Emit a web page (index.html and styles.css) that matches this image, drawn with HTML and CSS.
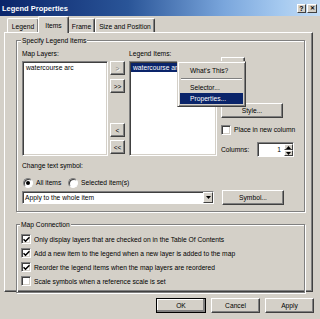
FILE: index.html
```html
<!DOCTYPE html>
<html lang="en">

<head>
  <meta charset="UTF-8">
  <meta name="viewport" content="width=device-width, initial-scale=1.0">
  <title>Legend Properties</title>
  <link rel="stylesheet" href="styles.css">
</head>

<body>
  <div class="dialog">
    <div class="titlebar">
      <span class="titlebar__text">Legend Properties</span>
      <span class="cap-btn">?</span>
      <span class="cap-btn cap-btn--close">&#x2715;</span>
    </div>

    <div class="tabs">
      <span class="tab tab--legend">Legend</span>
      <span class="tab tab--items tab--active">Items</span>
      <span class="tab tab--frame">Frame</span>
      <span class="tab tab--size">Size and Position</span>
    </div>

    <div class="panel">
      <!-- 항목 지정 -->
      <fieldset class="group group--items">
        <legend>Specify Legend Items</legend>
        <div class="lists">
          <div class="list-col">
            <div class="label">Map Layers:</div>
            <div class="listbox listbox--layers">
              <div class="list-item">watercourse arc</div>
            </div>
          </div>
          <div class="move-col">
            <button class="btn btn--move btn--off">&gt;</button>
            <button class="btn btn--move btn--all">&gt;&gt;</button>
            <button class="btn btn--move btn--back">&lt;</button>
            <button class="btn btn--move btn--back-all">&lt;&lt;</button>
          </div>
          <div class="list-col">
            <div class="label">Legend Items:</div>
            <div class="listbox listbox--legend">
              <div class="list-item list-item--sel">watercourse arc</div>
            </div>
          </div>
          <div class="side-col">
            <button class="btn btn--arrow btn--up"></button>
            <button class="btn btn--arrow btn--down"></button>
            <button class="btn btn--style">Style...</button>
            <div class="check-row check-row--column">
              <span class="check"></span>
              <span>Place in new column</span>
            </div>
            <div class="columns-row">
              <span class="columns-row__label">Columns:</span>
              <div class="spin">
                <span class="spin__value">1</span>
                <div class="spin__btns">
                  <span class="spin__btn"><svg width="5" height="3" viewBox="0 0 5 3"><path d="M0 3h5L2.5 0z" fill="#000"/></svg></span>
                  <span class="spin__btn"><svg width="5" height="3" viewBox="0 0 5 3"><path d="M0 0h5L2.5 3z" fill="#000"/></svg></span>
                </div>
              </div>
            </div>
          </div>
        </div>

        <div class="label label--symbol">Change text symbol:</div>
        <div class="radios">
          <span class="radio radio--on"></span>
          <span class="radio-text radio-text--all">All items</span>
          <span class="radio"></span>
          <span class="radio-text">Selected item(s)</span>
        </div>
        <div class="symbol-row">
          <div class="combo">
            <span class="combo__text">Apply to the whole item</span>
            <span class="combo__btn"><svg width="5" height="3" viewBox="0 0 5 3"><path d="M0 0h5L2.5 3z" fill="#000"/></svg></span>
          </div>
          <button class="btn btn--symbol">Symbol...</button>
        </div>
      </fieldset>

      <!-- 지도 연결 -->
      <fieldset class="group group--connection">
        <legend>Map Connection</legend>
        <div class="check-row">
          <span class="check check--on"><svg width="7" height="7" viewBox="0 0 7 7"><path d="M0.5 3.2 2.5 5.2 6.5 1.2" fill="none" stroke="#000" stroke-width="1.6"/></svg></span>
          <span>Only display layers that are checked on in the Table Of Contents</span>
        </div>
        <div class="check-row">
          <span class="check check--on"><svg width="7" height="7" viewBox="0 0 7 7"><path d="M0.5 3.2 2.5 5.2 6.5 1.2" fill="none" stroke="#000" stroke-width="1.6"/></svg></span>
          <span>Add a new item to the legend when a new layer is added to the map</span>
        </div>
        <div class="check-row">
          <span class="check check--on"><svg width="7" height="7" viewBox="0 0 7 7"><path d="M0.5 3.2 2.5 5.2 6.5 1.2" fill="none" stroke="#000" stroke-width="1.6"/></svg></span>
          <span>Reorder the legend items when the map layers are reordered</span>
        </div>
        <div class="check-row">
          <span class="check"></span>
          <span>Scale symbols when a reference scale is set</span>
        </div>
      </fieldset>
    </div>

    <div class="footer">
      <button class="btn btn--footer btn--default">OK</button>
      <button class="btn btn--footer">Cancel</button>
      <button class="btn btn--footer">Apply</button>
    </div>

    <!-- 우클릭 메뉴 -->
    <div class="menu">
      <div class="menu__item">What's This?</div>
      <div class="menu__sep"></div>
      <div class="menu__item">Selector...</div>
      <div class="menu__item menu__item--hot">Properties...</div>
    </div>
  </div>
</body>

</html>
```

FILE: styles.css
```css
* {
  box-sizing: border-box;
}

body {
  margin: 0;
  background: #d4d0c8;
  font: 6.7px/9px "Liberation Sans", Arial, sans-serif;
  color: #000;
}

.dialog {
  position: relative;
  width: 320px;
  height: 319px;
  overflow: hidden;
  background: #d4d0c8;
}

/* title bar */
.titlebar {
  display: flex;
  align-items: center;
  height: 16px;
  padding: 0 3px 0 2px;
  background: linear-gradient(90deg, #0a246a 0%, #2a5598 40%, #7aa6dc 70%, #a6caf0 88%, #c4dcf4 100%);
}

.titlebar__text {
  flex: 1;
  color: #fff;
  font-weight: bold;
  font-size: 7.5px;
}

.cap-btn {
  display: flex;
  align-items: center;
  justify-content: center;
  width: 9px;
  height: 9px;
  background: #d4d0c8;
  border: 1px solid;
  border-color: #fff #404040 #404040 #fff;
  font-size: 7px;
  font-weight: bold;
  line-height: 1;
}

.cap-btn--close {
  width: 10px;
  margin-left: 1px;
  font-size: 6px;
}

/* tabs */
.tabs {
  display: flex;
  align-items: flex-end;
  height: 16px;
  padding-left: 6px;
}

.tab {
  position: relative;
  height: 14px;
  padding-top: 3px;
  text-align: center;
  white-space: nowrap;
  border: 1px solid;
  border-bottom: 0;
  border-color: #fff #404040 #fff #fff;
  border-radius: 2px 2px 0 0;
  box-shadow: inset -1px 0 #808080;
}

.tab--legend {
  width: 32px;
  margin-left: 1px;
}

.tab--items {
  width: 29px;
}

.tab--frame {
  width: 27px;
}

.tab--size {
  width: 60px;
}

.tab--active {
  z-index: 1;
  height: 17px;
  margin: 0 -1px -1px -1px;
  padding-top: 4px;
  width: 31px;
  background: #d4d0c8;
}

/* panel */
.panel {
  width: 309px;
  height: 260px;
  margin-left: 4px;
  padding: 3px 0 0 11px;
  border: 1px solid;
  border-color: #fff #404040 #404040 #fff;
  box-shadow: inset -1px -1px #808080;
}

.group {
  width: 289px;
  margin: 0;
  padding: 4px 0 6px 5px;
  min-width: 0;
  border: 1px solid #808080;
  box-shadow: inset 1px 1px #fff, 1px 1px #fff;
}

.group legend {
  margin-left: -1px;
  padding: 0 1px;
  background: #d4d0c8;
  line-height: 9px;
}

.group--connection {
  margin-top: 8px;
  padding: 3px 0 0 4px;
  height: 73px;
}

.label {
  height: 9px;
}

/* list area */
.lists {
  display: flex;
}

.list-col .label {
  margin-bottom: 3px;
}

.listbox {
  width: 87px;
  height: 95px;
  padding: 1px 1px;
  background: #fff;
  border: 1px solid;
  border-color: #808080 #fff #fff #808080;
  box-shadow: inset 1px 1px #404040, inset -1px -1px #d4d0c8;
}

.listbox--layers {
  width: 86px;
}

.listbox--legend {
  width: 88px;
}

.list-item {
  padding: 0 2px;
  line-height: 9px;
  white-space: nowrap;
  overflow: hidden;
}

.list-item--sel {
  background: #0a246a;
  color: #fff;
}

.btn {
  display: flex;
  align-items: center;
  justify-content: center;
  padding: 0;
  background: #d4d0c8;
  font: inherit;
  color: #000;
  border: 1px solid;
  border-color: #fff #404040 #404040 #fff;
  box-shadow: inset -1px -1px #808080;
}

.move-col {
  display: flex;
  flex-direction: column;
  width: 15px;
  margin-left: 2px;
  padding-top: 12px;
}

.btn--move {
  width: 15px;
  height: 14px;
  font-size: 6.5px;
}

.btn--off {
  color: #808080;
  text-shadow: 1px 1px #fff;
}

.btn--all {
  margin-top: 4px;
}

.btn--back {
  margin-top: 30px;
}

.btn--back-all {
  margin-top: 3px;
}

.move-col + .list-col {
  margin-left: 4px;
}

.side-col {
  display: flex;
  flex-direction: column;
  width: 73px;
  margin-left: 4px;
  padding-top: 8px;
}

.btn--arrow {
  width: 24px;
  height: 15px;
}

.btn--down {
  margin-top: 3px;
}

.btn--style {
  width: 62px;
  height: 15px;
  margin-top: 13px;
}

.check-row {
  display: flex;
  align-items: center;
  height: 14px;
  white-space: nowrap;
}

.check-row--column {
  height: 11px;
  margin-top: 6px;
}

.check {
  display: flex;
  align-items: center;
  justify-content: center;
  flex: none;
  width: 10px;
  height: 10px;
  margin-right: 3px;
  background: #fff;
  border: 1px solid;
  border-color: #808080 #fff #fff #808080;
  box-shadow: inset 1px 1px #404040, inset -1px -1px #d4d0c8;
}

.columns-row {
  display: flex;
  align-items: center;
  height: 15px;
  margin-top: 7px;
}

.columns-row__label {
  width: 36px;
}

.spin {
  display: flex;
  width: 37px;
  height: 15px;
  background: #fff;
  border: 1px solid;
  border-color: #808080 #fff #fff #808080;
  box-shadow: inset 1px 1px #404040;
}

.spin__value {
  flex: 1;
  text-align: right;
  padding: 2px 3px 0 0;
}

.spin__btns {
  display: flex;
  flex-direction: column;
  width: 9px;
  padding: 1px 0 0 0;
}

.spin__btn {
  display: flex;
  align-items: center;
  justify-content: center;
  height: 6px;
  background: #d4d0c8;
  border: 1px solid;
  border-color: #fff #404040 #404040 #fff;
}

.label--symbol {
  margin-top: 4px;
}

.radios {
  display: flex;
  align-items: center;
  height: 13px;
  margin-top: 6px;
}

.radio {
  display: flex;
  align-items: center;
  justify-content: center;
  flex: none;
  width: 10px;
  height: 10px;
  margin: 0 3px 0 1px;
  background: #fff;
  border-radius: 50%;
  border: 1px solid;
  border-color: #808080 #fff #fff #808080;
  box-shadow: inset 1px 1px #404040;
}

.radio--on::after {
  content: "";
  width: 4px;
  height: 4px;
  border-radius: 50%;
  background: #000;
}

.radio-text {
  white-space: nowrap;
}

.radio-text--all {
  width: 31px;
}

.symbol-row {
  display: flex;
  align-items: center;
  height: 15px;
  margin-top: 1px;
}

.combo {
  display: flex;
  align-items: center;
  width: 192px;
  height: 13px;
  margin-right: 8px;
  background: #fff;
  border: 1px solid;
  border-color: #808080 #fff #fff #808080;
  box-shadow: inset 1px 1px #404040;
}

.combo__text {
  flex: 1;
  padding-left: 2px;
}

.combo__btn {
  display: flex;
  align-items: center;
  justify-content: center;
  width: 10px;
  height: 11px;
  background: #d4d0c8;
  border: 1px solid;
  border-color: #fff #404040 #404040 #fff;
}

.btn--symbol {
  width: 62px;
  height: 15px;
}

/* bottom buttons */
.footer {
  display: flex;
  justify-content: flex-end;
  gap: 5px;
  margin-top: 6px;
  padding-right: 6px;
}

.btn--footer {
  width: 49px;
  height: 15px;
}

.btn--default {
  width: 50px;
  outline: 1px solid #000;
  outline-offset: -1px;
  box-shadow: inset -2px -2px #808080, inset 1px 1px #fff;
}

/* context menu */
.menu {
  position: absolute;
  left: 177px;
  top: 61px;
  width: 69px;
  padding: 2px 2px;
  background: #d4d0c8;
  border: 1px solid;
  border-color: #d4d0c8 #404040 #404040 #d4d0c8;
  box-shadow: inset 1px 1px #fff, inset -1px -1px #808080;
}

.menu__item {
  height: 11px;
  padding: 1px 0 0 10px;
  white-space: nowrap;
}

.menu__item:first-child {
  height: 12px;
  padding-top: 2px;
}

.menu__sep {
  height: 6px;
  margin: 0 1px;
  border-top: 2px solid transparent;
  background: linear-gradient(#808080 0 1px, #fff 1px 2px, transparent 2px);
}

.menu__item--hot {
  background: #0a246a;
  color: #fff;
}
```
